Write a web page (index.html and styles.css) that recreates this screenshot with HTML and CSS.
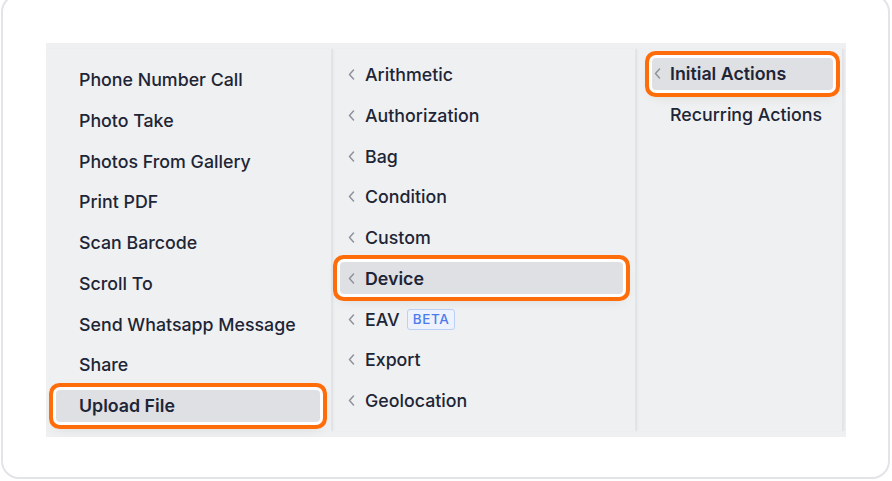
FILE: index.html
```html
<html lang="en">
<head>
  <meta charset="UTF-8">
  <title>Action picker</title>
  <link rel="stylesheet" href="styles.css">
</head>
<body>
  <div class="card">
    <div class="panel">
      <div class="column col-actions">
        <div class="item">Phone Number Call</div>
        <div class="item">Photo Take</div>
        <div class="item">Photos From Gallery</div>
        <div class="item">Print PDF</div>
        <div class="item">Scan Barcode</div>
        <div class="item">Scroll To</div>
        <div class="item">Send Whatsapp Message</div>
        <div class="item">Share</div>
        <div class="item selected">Upload File</div>
      </div>

      <div class="column col-groups">
        <div class="item"><svg class="chevron" viewBox="0 0 7 11"><polyline points="5.5,1 1.5,5.5 5.5,10"/></svg>Arithmetic</div>
        <div class="item"><svg class="chevron" viewBox="0 0 7 11"><polyline points="5.5,1 1.5,5.5 5.5,10"/></svg>Authorization</div>
        <div class="item"><svg class="chevron" viewBox="0 0 7 11"><polyline points="5.5,1 1.5,5.5 5.5,10"/></svg>Bag</div>
        <div class="item"><svg class="chevron" viewBox="0 0 7 11"><polyline points="5.5,1 1.5,5.5 5.5,10"/></svg>Condition</div>
        <div class="item"><svg class="chevron" viewBox="0 0 7 11"><polyline points="5.5,1 1.5,5.5 5.5,10"/></svg>Custom</div>
        <div class="item selected"><svg class="chevron" viewBox="0 0 7 11"><polyline points="5.5,1 1.5,5.5 5.5,10"/></svg>Device</div>
        <div class="item"><svg class="chevron" viewBox="0 0 7 11"><polyline points="5.5,1 1.5,5.5 5.5,10"/></svg>EAV<span class="badge">BETA</span></div>
        <div class="item"><svg class="chevron" viewBox="0 0 7 11"><polyline points="5.5,1 1.5,5.5 5.5,10"/></svg>Export</div>
        <div class="item"><svg class="chevron" viewBox="0 0 7 11"><polyline points="5.5,1 1.5,5.5 5.5,10"/></svg>Geolocation</div>
      </div>

      <div class="column col-kinds">
        <div class="item selected"><svg class="chevron" viewBox="0 0 7 11"><polyline points="5.5,1 1.5,5.5 5.5,10"/></svg>Initial Actions</div>
        <div class="item"><span class="chevron-space"></span>Recurring Actions</div>
      </div>
    </div>
  </div>
</body>
</html>
```

FILE: styles.css
```css
body {
  margin: 0;
  background-color: #ffffff;
  font-family: Inter, "Noto Sans", Arial, sans-serif;
  overflow: hidden;
}
.card {
  box-sizing: border-box;
  width: 889px;
  height: 485px;
  margin: -6px 0 0 1px;
  padding: 47px 0 0 43px;
  border: 2px solid #e2e4e8;
  border-radius: 18px;
  background-color: #ffffff;
}
.panel {
  box-sizing: border-box;
  display: flex;
  width: 800px;
  height: 394px;
  padding: 6px 0;
  background-color: #eff0f2;
}
.column {
  box-sizing: border-box;
  display: flex;
  flex-direction: column;
  gap: 8.75px;
  border-right: 2px solid #e3e4e8;
  box-shadow: 1px 0 2px rgba(0, 0, 0, 0.03);
}
.col-actions {
  width: 287px;
  padding: 14.5px 11px 0 10px;
}
.col-groups {
  width: 304px;
  padding: 9.5px 12px 0 7px;
}
.col-kinds {
  width: 207px;
  padding: 8.5px 9px 0 15px;
}
.item {
  display: flex;
  align-items: center;
  height: 32px;
  border-radius: 4px;
  font-size: 17.8px;
  font-weight: 500;
  color: #1d2536;
  white-space: nowrap;
}
.col-actions .item {
  padding-left: 23px;
}
.col-groups .item {
  padding-left: 8px;
}
.col-kinds .item {
  padding-left: 2px;
}
.chevron {
  width: 7px;
  height: 11px;
  margin-right: 10px;
  fill: none;
  stroke: #8e939b;
  stroke-width: 1.5;
  stroke-linecap: round;
  stroke-linejoin: round;
}
.col-kinds .chevron {
  margin-right: 9px;
}
.chevron-space {
  display: inline-block;
  width: 16px;
}
.selected {
  font-weight: 600;
  background-color: #dfe0e4;
  box-shadow: 0 0 0 3px #ffffff, 0 0 0 7px #ff6d0a, 0 5px 14px rgba(0, 0, 0, 0.12);
  position: relative;
}
.badge {
  margin-left: 7px;
  padding: 1px 5px;
  font-size: 13.5px;
  font-weight: 500;
  letter-spacing: 0.6px;
  color: #4c7ceb;
  background-color: #edf2fd;
  border: 1px solid #bdd0f7;
  border-radius: 3px;
  line-height: 17px;
}
```
